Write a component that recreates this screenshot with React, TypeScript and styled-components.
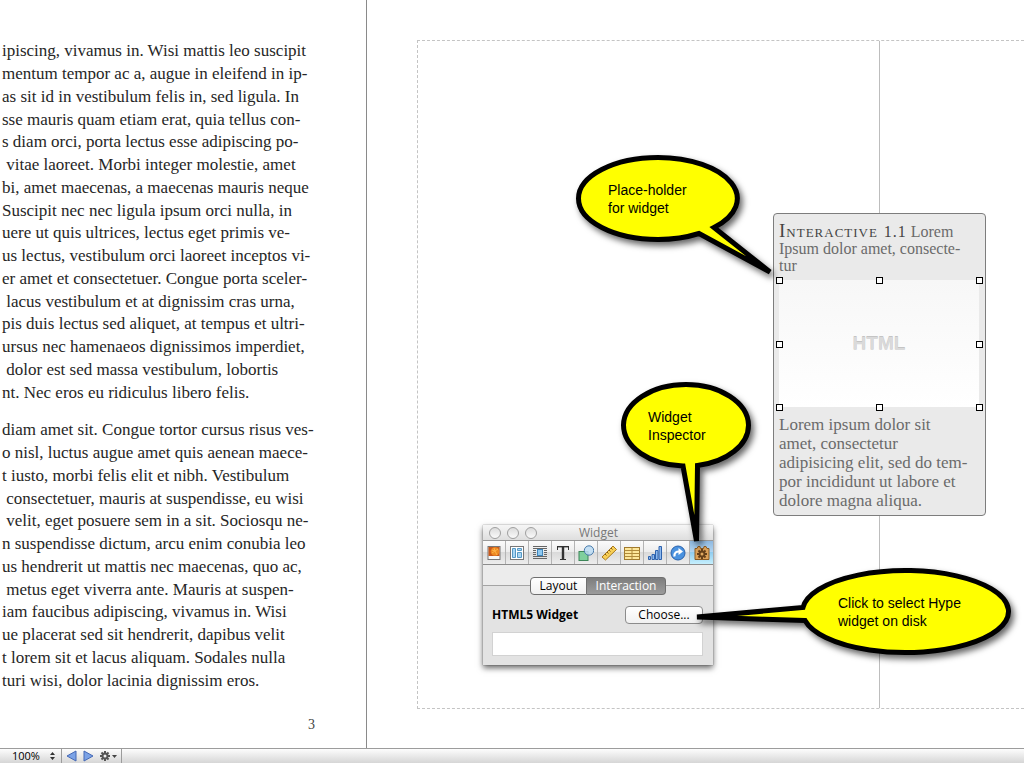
import React from "react";
import styled, { createGlobalStyle } from "styled-components";

const Global = createGlobalStyle`
  *, *::before, *::after { box-sizing: border-box; }
  body { margin: 0; background: #fff; }
  p, h2 { margin: 0; font-weight: normal; }
`;

const serif = `Georgia, "Liberation Serif", serif`;
const ui = `"Lucida Grande", "Open Sans", "Noto Sans", sans-serif`;

const Window = styled.div`
  display: flex;
  flex-direction: column;
  height: 100vh;
  overflow: hidden;
`;

const Spread = styled.main`
  position: relative;
  flex: 1;
  display: flex;
  min-height: 0;
  overflow: hidden;
`;

const TextPage = styled.section`
  display: flex;
  flex-direction: column;
  gap: 15px;
  flex: none;
  width: 367px;
  padding: 40px 0 0 2px;
  border-right: 1px solid #8a8a8a;
  overflow: hidden;
  font-family: ${serif};
  font-size: 17px;
  color: #262626;
`;

const Paragraph = styled.p<{ $height: number }>`
  display: grid;
  grid-auto-rows: 1fr;
  align-items: center;
  height: ${(p) => p.$height}px;
  line-height: 22px;
  white-space: pre;
`;

const PageNumber = styled.span`
  width: 313px;
  margin-top: 9px;
  text-align: right;
  font-size: 14px;
  line-height: 18px;
  color: #444;
`;

const CanvasPage = styled.section`
  flex: 1;
  display: flex;
  padding: 40px 0 39px 50px;
`;

const Guides = styled.div`
  flex: 1;
  display: flex;
  border: 1px dashed #c4c4c4;
  border-right: 0;
`;

const ColumnGuide = styled.div`
  width: 462px;
  border-right: 1px solid #bdbdbd;
`;

const Placeholder = styled.article`
  position: absolute;
  left: 773px;
  top: 213px;
  width: 213px;
  height: 303px;
  padding: 9px 5px 0;
  border: 1px solid #7d7d7d;
  border-radius: 4px;
  background: #eaeaea;
  font-family: ${serif};
  color: #6b6b6b;
  white-space: pre;
`;

const Caption = styled.h2`
  height: 57px;
  font-size: 16px;
  line-height: 17px;
`;

const Label = styled.span`
  font-size: 19px;
  font-variant: small-caps;
  letter-spacing: 1px;
  line-height: 16px;
  color: #444;
`;

const LabelNumber = styled.span`
  font-size: 16px;
`;

const Media = styled.div`
  position: relative;
  display: grid;
  place-items: center;
  width: 200px;
  height: 127px;
  background: linear-gradient(#f7f7f7, #fff);
  font: bold 19px "Liberation Sans", sans-serif;
  color: #dadada;
  text-shadow: 0 -1px 0 #c4c4c4;
`;

const Handle = styled.i<{ $x: number; $y: number }>`
  position: absolute;
  left: ${(p) => p.$x}%;
  top: ${(p) => p.$y}%;
  width: 7px;
  height: 7px;
  margin: -3px;
  border: 1px solid #000;
  background: #fff;
`;

const Body = styled.p`
  padding-top: 8px;
  font-size: 17px;
  line-height: 19px;
`;

const Inspector = styled.aside`
  position: absolute;
  left: 483px;
  top: 525px;
  width: 230px;
  background: #e3e3e3;
  box-shadow: 0 3px 6px rgba(0, 0, 0, 0.6), 0 0 1px rgba(0, 0, 0, 0.5);
  font-family: ${ui};
  font-size: 12px;
  color: #000;
`;

const TitleBar = styled.header`
  display: flex;
  align-items: center;
  height: 16px;
  padding-left: 6px;
  gap: 6px;
  background: linear-gradient(#f6f6f6, #dedede);
  border-bottom: 1px solid #9a9a9a;
  color: #777;
`;

const Light = styled.button`
  width: 12px;
  height: 12px;
  padding: 0;
  border: 1px solid #9f9f9f;
  border-radius: 50%;
  background: linear-gradient(#dcdcdc, #fafafa);
`;

const Title = styled.span`
  margin-left: 36px;
  line-height: 15px;
`;

const Tools = styled.nav`
  display: grid;
  grid-template-columns: repeat(10, 1fr);
  height: 24px;
  border-bottom: 1px solid #8c8c8c;
`;

const Tool = styled.button<{ $on?: boolean }>`
  display: grid;
  place-items: center;
  padding: 0;
  border: 0;
  border-right: 1px solid #b4b4b4;
  background: ${(p) =>
    p.$on
      ? "linear-gradient(#8fb9e0, #b3d6f2 50%, #90cdf0 50%, #c5effd)"
      : "linear-gradient(#fbfbfb, #ececec 50%, #dadada 50%, #ededed)"};
  &:last-child { border-right: 0; }
`;

const TabRow = styled.div`
  display: flex;
  align-items: center;
  height: 41px;
  background: linear-gradient(#ececec 20px, #a4a4a4 20px, #a4a4a4 21px, #e3e3e3 21px);
  justify-content: center;
`;

const Tab = styled.button<{ $on?: boolean }>`
  width: ${(p) => (p.$on ? 79 : 57)}px;
  height: 18px;
  padding: 0;
  border: 1px solid #6f6f6f;
  border-left-width: ${(p) => (p.$on ? 0 : 1)}px;
  border-radius: ${(p) => (p.$on ? "0 4px 4px 0" : "4px 0 0 4px")};
  background: ${(p) => (p.$on ? "linear-gradient(#7d7d7d, #9c9c9c)" : "linear-gradient(#fff, #f0f0f0)")};
  color: ${(p) => (p.$on ? "#fff" : "#000")};
  font: 12px/16px ${ui};
`;

const Form = styled.div`
  display: grid;
  grid-template-columns: 1fr 78px;
  row-gap: 8px;
  align-items: center;
  padding: 0 10px 9px 9px;
`;

const FieldLabel = styled.label`
  font-weight: bold;
  line-height: 18px;
`;

const Choose = styled.button`
  height: 18px;
  padding: 0;
  border: 1px solid #8c8c8c;
  border-radius: 4px;
  background: linear-gradient(#fff, #f1f1f1);
  font: 12px/16px ${ui};
`;

const Field = styled.input`
  grid-column: 1 / -1;
  width: 100%;
  height: 24px;
  border: 1px solid #d2d2d2;
  background: #fff;
`;

const CalloutBox = styled.div<{ $x: number; $y: number; $w: number; $h: number }>`
  position: absolute;
  left: ${(p) => p.$x}px;
  top: ${(p) => p.$y}px;
  width: ${(p) => p.$w}px;
  height: ${(p) => p.$h}px;
  pointer-events: none;
  svg {
    position: absolute;
    inset: 0;
    overflow: visible;
    filter: drop-shadow(3px 4px 3px rgba(0, 0, 0, 0.6));
  }
`;

const CalloutText = styled.p<{ $pad: number }>`
  position: relative;
  padding: 26px 0 0 ${(p) => p.$pad}px;
  font: 14px/18px "Liberation Sans", Arial, sans-serif;
  color: #000;
  white-space: pre;
`;

const Status = styled.footer`
  display: flex;
  flex: none;
  height: 15px;
  border-top: 1px solid #9c9c9c;
  background: linear-gradient(#fdfdfd, #d6d6d6);
  font: 11px/14px ${ui};
`;

const Zoom = styled.button`
  display: flex;
  align-items: center;
  justify-content: space-between;
  width: 62px;
  padding: 0 6px 0 12px;
  border: 0;
  border-right: 1px solid #9c9c9c;
  background: none;
  font: inherit;
`;

const Pager = styled.div`
  display: flex;
  align-items: center;
  gap: 5px;
  width: 60px;
  padding-left: 4px;
  border-right: 1px solid #9c9c9c;
`;

const Plain = styled.button`
  display: flex;
  padding: 0;
  border: 0;
  background: none;
`;

const first = [
  "ipiscing, vivamus in. Wisi mattis leo suscipit",
  "mentum tempor ac a, augue in eleifend in ip-",
  "as sit id in vestibulum felis in, sed ligula. In",
  "sse mauris quam etiam erat, quia tellus con-",
  "s diam orci, porta lectus esse adipiscing po-",
  " vitae laoreet. Morbi integer molestie, amet",
  "bi, amet maecenas, a maecenas mauris neque",
  "Suscipit nec nec ligula ipsum orci nulla, in",
  "uere ut quis ultrices, lectus eget primis ve-",
  "us lectus, vestibulum orci laoreet inceptos vi-",
  "er amet et consectetuer. Congue porta sceler-",
  " lacus vestibulum et at dignissim cras urna,",
  "pis duis lectus sed aliquet, at tempus et ultri-",
  "ursus nec hamenaeos dignissimos imperdiet,",
  " dolor est sed massa vestibulum, lobortis",
  "nt. Nec eros eu ridiculus libero felis.",
];

const second = [
  "diam amet sit. Congue tortor cursus risus ves-",
  "o nisl, luctus augue amet quis aenean maece-",
  "t iusto, morbi felis elit et nibh. Vestibulum",
  " consectetuer, mauris at suspendisse, eu wisi",
  " velit, eget posuere sem in a sit. Sociosqu ne-",
  "n suspendisse dictum, arcu enim conubia leo",
  "us hendrerit ut mattis nec maecenas, quo ac,",
  " metus eget viverra ante. Mauris at suspen-",
  "iam faucibus adipiscing, vivamus in. Wisi",
  "ue placerat sed sit hendrerit, dapibus velit",
  "t lorem sit et lacus aliquam. Sodales nulla",
  "turi wisi, dolor lacinia dignissim eros.",
];

const spots = [[0, 0], [50, 0], [100, 0], [0, 50], [100, 50], [0, 100], [50, 100], [100, 100]];

const gear = (color: string, hole: string) => (
  <g>
    {[0, 45, 90, 135].map((a) => (
      <rect key={a} x="-1" y="-5" width="2" height="10" fill={color} transform={`rotate(${a})`} />
    ))}
    <circle r="3.4" fill={color} />
    <circle r="1.5" fill={hole} />
  </g>
);

const tools: { name: string; art: React.ReactNode }[] = [
  { name: "Document", art: <>
    <rect x="2" y="1.5" width="12" height="13" fill="#f8f8f8" stroke="#777" />
    <rect x="2.5" y="2" width="11" height="9" fill="#c8591c" />
    <circle cx="9" cy="6.5" r="4.3" fill="#ee8a22" />
    <path d="M6 5l3 1 3-2M6 8l3-2 2 4M8 3l1 3" stroke="#ffb347" fill="none" /></> },
  { name: "Layout", art: <>
    <rect x="1.5" y="1.5" width="13" height="13" fill="#fff" stroke="#777" />
    <path d="M3.5 3.5h3v9h-3zM8.5 3.5h4v2h-4zM8.5 7.5h4v5h-4z" fill="#a9d5f2" stroke="#5598c5" /></> },
  { name: "Wrap", art: <>
    <path d="M1 1.5h14M1 3.5h14M1 5.5h3M1 7.5h3M1 9.5h3M12 5.5h3M12 7.5h3M12 9.5h3M1 11.5h14M1 13.5h14" stroke="#666" />
    <rect x="5.5" y="4.5" width="5" height="6" fill="#8fc8ef" stroke="#3f86bb" /></> },
  { name: "Text", art: <>
    <path d="M2.500 5V1.500h11V5M8 1.500V14M5 14.500h6" fill="none" stroke="#333" />
    <path d="M8 1v13" stroke="#333" strokeWidth="2.400" />
    <path d="M2 1h12v1.400H2z" fill="#333" /></> },
  { name: "Graphic", art: <>
    <rect x="1" y="6.500" width="9" height="9" fill="#7fcf9d" stroke="#3d8658" />
    <circle cx="11" cy="5.500" r="4.700" fill="#bcdcf3" fillOpacity=".85" stroke="#4779aa" /></> },
  { name: "Metrics", art: <>
    <path d="M1 12L12 1l3.500 3.500L4.500 15z" fill="#f8cf55" stroke="#a77920" />
    <path d="M4 9l1.500 1.500M6 7l1.500 1.500M8 5l1.500 1.500M10 3l1.500 1.500" stroke="#81591a" /></> },
  { name: "Table", art: <>
    <rect x=".5" y="2.500" width="15" height="12" fill="#fde69a" stroke="#a17a2d" />
    <path d="M.5 5.500h15M.5 8.500h15M.5 11.500h15M8 2.500v12" stroke="#b08a3b" /></> },
  { name: "Chart", art: <path d="M1.500 11.500h2v3h-2zM5 9.500h2.500v5H5zM8.500 5.500h2.500v9H8.500zM12 1.500h2.500v13H12z" fill="#8db9ee" stroke="#2e62ad" /> },
  { name: "Hyperlink", art: <>
    <circle cx="8" cy="8" r="7" fill="#4a92df" stroke="#2a62ac" />
    <path d="M4.500 11.500c-.5-4 2-5 4.500-5" fill="none" stroke="#fff" strokeWidth="2.200" />
    <path d="M8.500 3L13 6.500 8.500 10z" fill="#fff" /></> },
  { name: "Widget", art: <>
    <path d="M1 3.500h2l1-2h2l.5 2h3l.5-2h2l1 2h2v11H1z" fill="#dca25a" stroke="#8a5a23" />
    <g transform="translate(8 9)">{gear("#65401a", "#e0aa62")}</g></> },
];

type CalloutProps = {
  x: number; y: number; w: number; h: number; path: string; pad: number; children: React.ReactNode;
};

const Callout = ({ x, y, w, h, path, pad, children }: CalloutProps) => (
  <CalloutBox $x={x} $y={y} $w={w} $h={h}>
    <svg width={w} height={h} aria-hidden="true">
      <path d={path} fill="#ffff00" stroke="#000" strokeWidth="5" />
    </svg>
    <CalloutText $pad={pad}>{children}</CalloutText>
  </CalloutBox>
);

export default function App() {
  return (
    <Window>
      <Global />
      <Spread>
        <TextPage>
          <Paragraph $height={364}>{first.map((t) => <span key={t}>{t}</span>)}</Paragraph>
          <Paragraph $height={273}>{second.map((t) => <span key={t}>{t}</span>)}</Paragraph>
          <PageNumber>3</PageNumber>
        </TextPage>
        <CanvasPage>
          <Guides><ColumnGuide /></Guides>
        </CanvasPage>

        <Placeholder>
          <Caption><Label>Interactive <LabelNumber>1.1</LabelNumber></Label>{" Lorem\nIpsum dolor amet, consecte-\ntur"}</Caption>
          <Media>
            HTML
            {spots.map(([x, y]) => <Handle key={`${x}-${y}`} $x={x} $y={y} />)}
          </Media>
          <Body>{"Lorem ipsum dolor sit\namet, consectetur\nadipisicing elit, sed do tem-\npor incididunt ut labore et\ndolore magna aliqua."}</Body>
        </Placeholder>

        <Inspector>
          <TitleBar>
            <Light aria-label="Close" /><Light aria-label="Minimize" /><Light aria-label="Zoom" />
            <Title>Widget</Title>
          </TitleBar>
          <Tools>
            {tools.map((t) => (
              <Tool key={t.name} aria-label={t.name} $on={t.name === "Widget"}>
                <svg width="16" height="16" viewBox="0 0 16 16">{t.art}</svg>
              </Tool>
            ))}
          </Tools>
          <TabRow><Tab>Layout</Tab><Tab $on>Interaction</Tab></TabRow>
          <Form>
            <FieldLabel htmlFor="widget-file">HTML5 Widget</FieldLabel>
            <Choose>Choose...</Choose>
            <Field id="widget-file" />
          </Form>
        </Inspector>

        <Callout x={576} y={155} w={196} h={120} pad={32}
          path="M138 72.500L194 117L123 78.500A79.500 41 0 0 1 82 84.500A79.500 41 0 0 1 82 2.500A79.500 41 0 0 1 138 72.500Z">{"Place-holder\nfor widget"}</Callout>
        <Callout x={621} y={382} w={130} h={160} pad={27}
          path="M76.500 83.500L75.500 159L62 84A62.500 41 0 0 1 2.500 43A62.500 41 0 0 1 65 2.500A62.500 41 0 0 1 127.500 43A62.500 41 0 0 1 76.500 83.500Z">{"Widget\nInspector"}</Callout>
        <Callout x={696} y={568} w={316} h={88} pad={142}
          path="M109 52.500L1 49L107 39.500A103 41 0 1 1 109 52.500Z">{"Click to select Hype\nwidget on disk"}</Callout>
      </Spread>
      <Status>
        <Zoom>
          100%
          <svg width="5" height="8" viewBox="0 0 5 8"><path d="M0 3L2.500 0 5 3zM0 5l2.500 3L5 5z" fill="#333" /></svg>
        </Zoom>
        <Pager>
          <Plain aria-label="Previous page"><svg width="11" height="12"><path d="M10 1v10L1 6z" fill="#7ba2e6" stroke="#4468b5" /></svg></Plain>
          <Plain aria-label="Next page"><svg width="11" height="12"><path d="M2 1v10l9-5z" fill="#7ba2e6" stroke="#4468b5" /></svg></Plain>
          <Plain aria-label="Actions">
            <svg width="20" height="12"><g transform="translate(7 6)">{gear("#555", "#eee")}</g><path d="M14 5h5l-2.500 3z" fill="#444" /></svg>
          </Plain>
        </Pager>
      </Status>
    </Window>
  );
}
